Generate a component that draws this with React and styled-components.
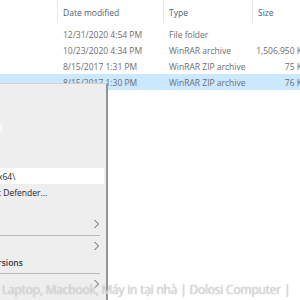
import React from "react";
import styled, { createGlobalStyle } from "styled-components";

const GlobalStyle = createGlobalStyle`
  html, body {
    margin: 0;
    padding: 0;
    background: #ffffff;
  }
  body {
    font-family: "Open Sans", "Noto Sans", sans-serif;
  }
`;

const Screen = styled.div`
  position: relative;
  width: 300px;
  height: 300px;
  overflow: hidden;
  background: #ffffff;
`;

const FileList = styled.div`
  display: flex;
  flex-direction: column;
  width: 302px;
`;

const cols = "57px 106px 89px 50px";

const HeaderRow = styled.div`
  display: grid;
  grid-template-columns: ${cols};
  height: 26px;
`;

const HeaderCell = styled.div`
  display: flex;
  align-items: center;
  padding: 2px 0 0 ${(p) => (p.$first ? 0 : 5)}px;
  font-size: 8.5px;
  color: #4c607a;
  border-left: ${(p) => (p.$first ? "none" : "1px solid #e8e8e8")};
  margin-bottom: 3px;
  white-space: nowrap;
`;

const Row = styled.div`
  display: grid;
  grid-template-columns: ${cols};
  height: 16px;
  background: ${(p) => (p.$selected ? "#cce8ff" : "transparent")};
`;

const Cell = styled.div`
  display: flex;
  align-items: center;
  justify-content: ${(p) => (p.$right ? "flex-end" : "flex-start")};
  padding-left: ${(p) => (p.$right ? 0 : 6)}px;
  font-size: 8.5px;
  color: #6d6d6d;
  white-space: nowrap;
`;

const ContextMenu = styled.div`
  position: absolute;
  top: 83px;
  left: -3px;
  width: 104px;
  height: 230px;
  padding: 4px 2px 0 3px;
  background: #eeeeee;
  border-top: 1px solid #d2d2d2;
  border-right: 2px solid #939393;
  display: flex;
  flex-direction: column;
`;

const MenuItem = styled.div`
  position: relative;
  display: flex;
  align-items: center;
  height: 16px;
  font-size: 8.5px;
  color: ${(p) => (p.$bold ? "#3a3a3a" : "#1e1e1e")};
  font-weight: ${(p) => (p.$bold ? 600 : 400)};
  background: ${(p) => (p.$hover ? "#ffffff" : "transparent")};
  white-space: nowrap;
`;

const ItemText = styled.span`
  margin-left: -2px;
`;

const Chevron = styled.svg`
  position: absolute;
  right: 4px;
  top: 3px;
`;

const Separator = styled.div`
  height: 6px;
  display: flex;
  align-items: center;
  padding-right: 4px;
  &::after {
    content: "";
    flex: 1;
    height: 1px;
    background: #b9b9b9;
  }
`;

const FaintIcon = styled.span`
  width: 4px;
  height: 8px;
  margin-left: -2px;
  background: #f8f8f8;
  border-radius: 1px;
`;

const Watermark = styled.div`
  position: absolute;
  left: 2px;
  top: 281px;
  font-family: "Open Sans", "Noto Sans", sans-serif;
  font-size: 12px;
  letter-spacing: -0.2px;
  color: rgba(225, 225, 225, 0.9);
  text-shadow: 0 0 1px #a5a5a5;
  white-space: nowrap;
`;

const files = [
  { date: "12/31/2020 4:54 PM", type: "File folder", size: "" },
  { date: "10/23/2020 4:34 PM", type: "WinRAR archive", size: "1,506,950 K" },
  { date: "8/15/2017 1:31 PM", type: "WinRAR ZIP archive", size: "75 K" },
  { date: "8/15/2017 1:30 PM", type: "WinRAR ZIP archive", size: "76 K", selected: true },
];

const ChevronIcon = () => (
  <Chevron width="7" height="10" viewBox="0 0 7 10">
    <path d="M1.5 1 L5.5 5 L1.5 9" fill="none" stroke="#5a5a5a" strokeWidth="1" />
  </Chevron>
);

const menu = [
  { kind: "item" },
  { kind: "item" },
  { kind: "item", icon: true },
  { kind: "item" },
  { kind: "item" },
  { kind: "item", text: "x64\\", hover: true },
  { kind: "item", text: "t Defender..." },
  { kind: "item" },
  { kind: "item", sub: true },
  { kind: "sep" },
  { kind: "item", sub: true },
  { kind: "item", text: "rsions", bold: true },
  { kind: "sep" },
  { kind: "item", sub: true },
];

export default function App() {
  return (
    <Screen>
      <GlobalStyle />
      <FileList>
        <HeaderRow>
          <HeaderCell $first />
          <HeaderCell>Date modified</HeaderCell>
          <HeaderCell>Type</HeaderCell>
          <HeaderCell>Size</HeaderCell>
        </HeaderRow>
        {files.map((f, i) => (
          <Row key={i} $selected={f.selected}>
            <Cell />
            <Cell>{f.date}</Cell>
            <Cell>{f.type}</Cell>
            <Cell $right>{f.size}</Cell>
          </Row>
        ))}
      </FileList>

      <ContextMenu>
        {menu.map((m, i) =>
          m.kind === "sep" ? (
            <Separator key={i} />
          ) : (
            <MenuItem key={i} $hover={m.hover} $bold={m.bold}>
              {m.icon && <FaintIcon />}
              {m.text && <ItemText>{m.text}</ItemText>}
              {m.sub && <ChevronIcon />}
            </MenuItem>
          )
        )}
      </ContextMenu>

      <Watermark>Laptop, Macbook, Máy in tại nhà | Dolosi Computer |</Watermark>
    </Screen>
  );
}
